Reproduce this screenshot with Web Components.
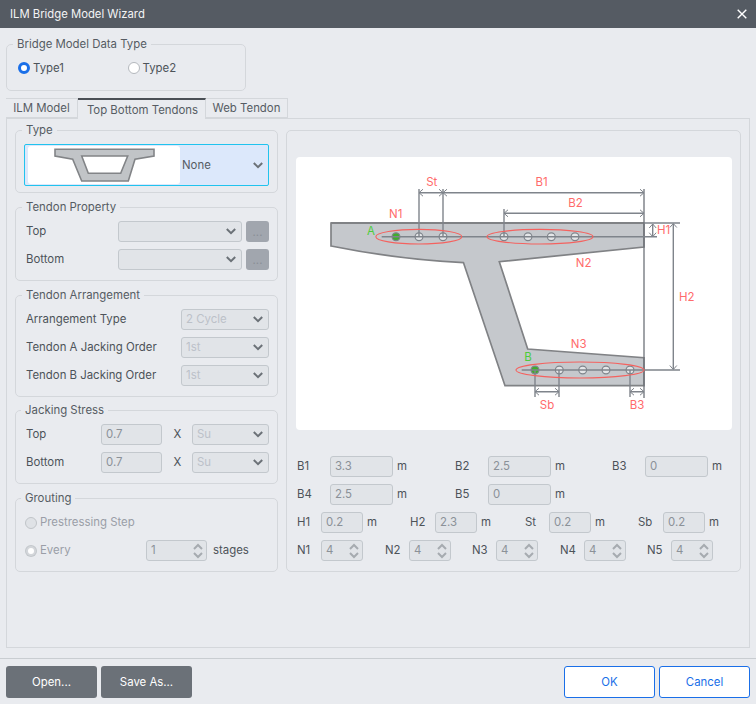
<!DOCTYPE html>
<html lang="en"><head><meta charset="utf-8"><title>ILM Bridge Model Wizard</title>
<style>html,body{margin:0;padding:0;background:#e9ebef}body{font:11.4px/14px Inter,"Liberation Sans",sans-serif;color:#4d5359}</style></head>
<body><ilm-wizard></ilm-wizard>
<script>
const chev = d => `<svg width="10" height="7" viewBox="0 0 10 7" aria-hidden="true"><path d="${d}" fill="none" stroke="currentColor" stroke-width="2"/></svg>`;
class XGroup extends HTMLElement{constructor(){super();const s=this.attachShadow({mode:'open'});
const t=this.getAttribute('title-text');
s.innerHTML=`<style>:host{display:block}
fieldset{margin:0;min-width:0;box-sizing:border-box;height:100%;border:1px solid #d4d7db;border-radius:5px;padding:var(--pt,7px) var(--pr,8px) var(--pb,10px) var(--pl,8px)}
legend{margin-left:var(--lm,-2px);padding:0 4px;height:14px;line-height:14px;color:#565c63;white-space:nowrap}
</style><fieldset>${t?`<legend>${t}</legend>`:''}<slot></slot></fieldset>`;}}
customElements.define('x-group',XGroup);
class XRow extends HTMLElement{constructor(){super();this.attachShadow({mode:'open'}).innerHTML=`<style>:host{display:flex;align-items:center;height:21px;margin-top:var(--mt,7px);white-space:nowrap}:host(:first-child){margin-top:0}</style><slot></slot>`;}}
customElements.define('x-row',XRow);
class XField extends HTMLElement{constructor(){super();const k=this.getAttribute('kind')||'text',v=this.getAttribute('value')||'';
let extra='';
if(k==='select')extra=`<span class="c">${chev('M.8 1 L5 5.2 L9.2 1')}</span>`;
if(k==='spin')extra=`<span class="s"><svg width="10" height="16" viewBox="0 0 10 16" aria-hidden="true"><path d="M1 6 L5 2 L9 6 M1 10 L5 14 L9 10" fill="none" stroke="currentColor" stroke-width="2"/></svg></span>`;
this.attachShadow({mode:'open'}).innerHTML=`<style>:host{display:flex;flex:none;box-sizing:border-box;height:21px;align-items:center;background:#e1e4e8;border:1px solid #c3c8cd;border-radius:3px;padding:0 4px 0 4px;color:${k==='select'?'#bcc1c8':'#8b9198'}}
.v{flex:1;overflow:hidden;padding-bottom:2px}.c{display:flex;color:#6b7177;padding-right:1px}.s{display:flex;color:#a6abb0;margin-right:-1px}</style><span class="v">${v}</span>${extra}`;}}
customElements.define('x-field',XField);
class XRadio extends HTMLElement{constructor(){super();const c=this.hasAttribute('checked'),d=this.hasAttribute('disabled');
const dot=d?(c?'background:#fff;border:2.5px solid #d3d6da;box-shadow:0 0 0 1px #c3c7cb':'background:#dfe2e6;border:1px solid #c0c4c8'):(c?'background:#fff;border:3.5px solid #1a6fe8':'background:#fff;border:1px solid #b4b8bd');
this.attachShadow({mode:'open'}).innerHTML=`<style>:host{display:inline-flex;align-items:center;gap:3px;color:${d?'#9a9ea7':'#4d5359'}}
span{padding-bottom:${d?2:0}px}
i{display:block;box-sizing:border-box;width:${d&&c?10:12}px;height:${d&&c?10:12}px;margin:${d&&c?'0 1px':'0'};border-radius:50%;${dot}}</style><i></i><span><slot></slot></span>`;}}
customElements.define('x-radio',XRadio);
class XButton extends HTMLElement{constructor(){super();const p=this.hasAttribute('primary');
this.attachShadow({mode:'open'}).innerHTML=`<style>:host{display:flex;align-items:center;justify-content:center;box-sizing:border-box;width:91px;height:32px;border-radius:3px;${p?'background:#fff;border:1px solid #1a6fe8;color:#1a6fe8':'background:#6b7178;color:#fff'}}</style><slot></slot>`;}}
customElements.define('x-button',XButton);
class XTabs extends HTMLElement{constructor(){super();this.attachShadow({mode:'open'}).innerHTML=`<style>:host{display:flex;height:20px;position:relative;z-index:1}
.t{box-sizing:border-box;height:20px;border:1px solid #d4d7db;border-left:0;display:flex;align-items:center;justify-content:center;color:#565c63}
.t:first-child{border-left:1px solid #d4d7db;padding-left:4px}
.a{height:21px;border-top:2px solid #4a4f55;border-bottom:0;padding-top:1px;padding-left:2px;background:#e9ebef}</style>
<div class="t" style="width:72px">ILM Model</div><div class="t a" style="width:128px">Top Bottom Tendons</div><div class="t" style="width:82px">Web Tendon</div>`;}}
customElements.define('x-tabs',XTabs);
class TypeCombo extends HTMLElement{constructor(){super();this.attachShadow({mode:'open'}).innerHTML=`<style>:host{display:flex;box-sizing:border-box;height:42px;border:1px solid #21c3ee;border-radius:2px;background:#dce8fb;padding:1px 3px 1px 3px;align-items:center}
.w{width:152px;height:38px;background:#fff;border-radius:3px;flex:none;display:block}
.n{flex:1;padding-left:2px;color:#565c63}.c{display:flex;color:#6b7177;padding-right:2px}</style>
<svg class="w" viewBox="28 146 152 38" aria-hidden="true"><path d="M55 149.3H154V156L135 159.3 128.3 181H81.7L72.7 159.3 55 156Z" fill="#c1c4c7" stroke="#828487" stroke-width="1.6"/><path d="M81.7 156 88.3 173.3H120.7L127.7 156Z" fill="#fff" stroke="#828487" stroke-width="1.6"/></svg>
<span class="n">None</span><span class="c">${chev('M.8 1 L5 5.2 L9.2 1')}</span>`;}}
customElements.define('type-combo',TypeCombo);
class BridgeDiagram extends HTMLElement{constructor(){super();
const R='#ff6b6b',G='#4ccc3a',D='#7f848b';
const circ=(x,y,g)=>`<circle cx="${x}" cy="${y}" r="3.9" fill="${g?'#3fae2c':'#e4e6e8'}" stroke="${D}" stroke-width="1.2"/>`;
const lab=(t,x,y,c=R)=>`<text x="${x}" y="${y}" fill="${c}" text-anchor="middle">${t}</text>`;
const ah=(x,y)=>`<path d="M${x+4} ${y-3.5}L${x} ${y}L${x+4} ${y+3.5}" fill="none" stroke="${D}" stroke-width="1"/>`;
const ar=(x,y)=>`<path d="M${x-4} ${y-3.5}L${x} ${y}L${x-4} ${y+3.5}" fill="none" stroke="${D}" stroke-width="1"/>`;
const au=(x,y)=>`<path d="M${x-3.5} ${y+4}L${x} ${y}L${x+3.5} ${y+4}" fill="none" stroke="${D}" stroke-width="1"/>`;
const ad=(x,y)=>`<path d="M${x-3.5} ${y-4}L${x} ${y}L${x+3.5} ${y-4}" fill="none" stroke="${D}" stroke-width="1"/>`;
const cT=[419,443,504,528,551.3,575], cB=[559.3,582.7,606,630];
this.attachShadow({mode:'open'}).innerHTML=`<style>:host{display:block;height:273px;background:#fff;border-radius:4px;overflow:hidden}svg{display:block;font:11.5px Inter,"Liberation Sans",sans-serif}</style>
<svg width="436" height="273" viewBox="296 157 436 273">
<path d="M331 223H644V247L499.3 261.7 527.7 349 644 357.7V385.7H505L463.5 262.7Q395 259 331 246Z" fill="#c5c8cc" stroke="#808285" stroke-width="1.7"/>
<path d="M331 223H644" stroke="#808285" stroke-width="2"/>
<path d="M644 189V398" stroke="#6d7279" stroke-width="1.3" fill="none"/>
${circ(396,236.7,1)}${cT.map(x=>circ(x,236.7)).join('')}
${circ(535,370,1)}${cB.map(x=>circ(x,370)).join('')}
<g stroke="${D}" stroke-width="1.4" fill="none">
<path d="M381.7 236.7H657M521.7 370H680M644 223H680"/>
<path d="M419 189V237M443 189V237M504 209V237"/>
<path d="M419 192.7H644M504 213.3H644"/>
<path d="M652.7 224V236M673.3 224V369"/>
<path d="M535 370V397M559 370V397M630 370V397"/>
<path d="M535 391.7H559M630 391.7H644"/></g>
${ah(419,192.7)}${ah(443,192.7)}${ar(443,192.7)}${ar(644,192.7)}${ah(504,213.3)}${ar(644,213.3)}
${au(652.7,224)}${ad(652.7,236.7)}${au(673.3,223.5)}${ad(673.3,369.5)}
${ah(535,391.7)}${ar(559,391.7)}${ah(630,391.7)}${ar(644,391.7)}
<g fill="none" stroke="#f4625f" stroke-width="1.1"><ellipse cx="418.8" cy="236.7" rx="43" ry="7.3"/><ellipse cx="540" cy="236.7" rx="53" ry="7.3"/><ellipse cx="580" cy="370" rx="64" ry="8"/></g>
${lab('St',431.7,186)}${lab('N1',395.7,218)}${lab('A',371,235,G)}${lab('B1',541.7,186)}${lab('B2',575.6,207)}${lab('H1',663.7,234)}${lab('N2',583.7,267)}${lab('H2',686.7,301)}${lab('N3',578.7,348)}${lab('B',528,361,G)}${lab('Sb',547,409)}${lab('B3',637,409)}
</svg>`;}}
customElements.define('bridge-diagram',BridgeDiagram);
class IlmWizard extends HTMLElement{constructor(){super();
const P=(l,v,lw,iw)=>`<div class="p"><span style="width:${lw}px">${l}</span><x-field value="${v}" style="width:${iw}px"></x-field><span class="m">m</span></div>`;
const N=n=>`<div class="p"><span style="width:24px">${n}</span><x-field kind="spin" value="4" style="width:42px"></x-field></div>`;
this.attachShadow({mode:'open'}).innerHTML=`<style>
:host{display:flex;flex-direction:column;width:756px;height:704px;overflow:hidden;background:#e9ebef}
header{flex:none;height:28px;background:#555b63;color:#f3f4f5;font-size:11.3px;display:flex;align-items:center;justify-content:space-between;padding:0 9px 0 10px}
main{flex:1;min-height:0;display:flex;flex-direction:column;padding:9px 6px 10px;}
.top{width:240px;--pt:7px;--pb:12px;--pl:11px;--lm:-5px}
.radios{display:flex;height:20px;align-items:center}
.radios x-radio{width:112px}
x-tabs{margin-top:7px}
.panel{flex:1;min-height:0;border:1px solid #d4d7db;margin-top:0;padding:4px 8px 0;display:flex;gap:8px;align-items:flex-start;box-sizing:border-box}
.left{width:263px;flex:none;display:flex;flex-direction:column;gap:7px}
.lb{flex:1;padding:0 0 2px 2px}
.x{width:30px;text-align:center;flex:none;padding:0 0 2px 1px;box-sizing:border-box}
.dots{flex:none;box-sizing:border-box;width:23px;height:21px;margin-left:4px;border-radius:3px;background:#a1a6ae;color:#8a8f96;display:flex;justify-content:center;align-items:center}
.st{margin-left:6px;padding-bottom:2px}
.right{flex:1;margin-top:7px;height:442px;--pt:26px;--pr:8px;--pb:0px;--pl:9px}
.params{display:flex;flex-direction:column;gap:7px;margin-top:26px;padding-left:1px}
.r{display:grid;height:21px;align-items:center;white-space:nowrap}
.p{display:flex;align-items:center;color:#4d5359}.p span{flex:none;padding-bottom:2px}.m{margin-left:4px}
footer{flex:none;border-top:1px solid #c9cdd1;padding:7px 6px 6px;display:flex;gap:4px}
footer .sp{flex:1}
</style>
<header><span>ILM Bridge Model Wizard</span><svg width="10" height="10" viewBox="0 0 10 10" aria-hidden="true"><path d="M.7.7 9.3 9.3M9.3.7.7 9.3" stroke="#fff" stroke-width="1.4"/></svg></header>
<main>
<x-group class="top" title-text="Bridge Model Data Type"><div class="radios"><x-radio checked>Type1</x-radio><x-radio>Type2</x-radio></div></x-group>
<x-tabs></x-tabs>
<div class="panel">
<div class="left">
<x-group title-text="Type" style="--pb:6px"><type-combo></type-combo></x-group>
<x-group title-text="Tendon Property">
<x-row><span class="lb">Top</span><x-field kind="select" style="width:124px"></x-field><span class="dots">...</span></x-row>
<x-row><span class="lb">Bottom</span><x-field kind="select" style="width:124px"></x-field><span class="dots">...</span></x-row>
</x-group>
<x-group title-text="Tendon Arrangement" style="--pt:7px;--pb:10px">
<x-row><span class="lb">Arrangement Type</span><x-field kind="select" value="2 Cycle" style="width:88px"></x-field></x-row>
<x-row><span class="lb">Tendon A Jacking Order</span><x-field kind="select" value="1st" style="width:88px"></x-field></x-row>
<x-row><span class="lb">Tendon B Jacking Order</span><x-field kind="select" value="1st" style="width:88px"></x-field></x-row>
</x-group>
<x-group title-text="Jacking Stress" style="margin-top:-1px;--lm:-3px">
<x-row><span class="lb">Top</span><x-field value="0.7" style="width:61px"></x-field><span class="x">X</span><x-field kind="select" value="Su" style="width:77px"></x-field></x-row>
<x-row><span class="lb">Bottom</span><x-field value="0.7" style="width:61px"></x-field><span class="x">X</span><x-field kind="select" value="Su" style="width:77px"></x-field></x-row>
</x-group>
<x-group title-text="Grouting" style="--lm:-3px">
<x-row style="padding-left:1px"><x-radio disabled>Prestressing Step</x-radio></x-row>
<x-row style="padding-left:1px"><x-radio disabled checked style="width:121px">Every</x-radio><x-field kind="spin" value="1" style="width:61px"></x-field><span class="st">stages</span></x-row>
</x-group>
</div>
<x-group class="right">
<bridge-diagram></bridge-diagram>
<div class="params">
<div class="r" style="grid-template-columns:158px 157px 1fr">${P('B1','3.3',33,63)}${P('B2','2.5',33,63)}${P('B3','0',33,63)}</div>
<div class="r" style="grid-template-columns:158px 157px 1fr">${P('B4','2.5',33,63)}${P('B5','0',33,63)}</div>
<div class="r" style="grid-template-columns:113px 115px 113px 1fr">${P('H1','0.2',24,42)}${P('H2','2.3',25,42)}${P('St','0.2',24,42)}${P('Sb','0.2',25,42)}</div>
<div class="r" style="grid-template-columns:88px 87px 88px 87px 1fr">${N('N1')}${N('N2')}${N('N3')}${N('N4')}${N('N5')}</div>
</div>
</x-group>
</div>
</main>
<footer><x-button>Open...</x-button><x-button>Save As...</x-button><span class="sp"></span><x-button primary>OK</x-button><x-button primary>Cancel</x-button></footer>`;}}
customElements.define('ilm-wizard',IlmWizard);
</script></body></html>
